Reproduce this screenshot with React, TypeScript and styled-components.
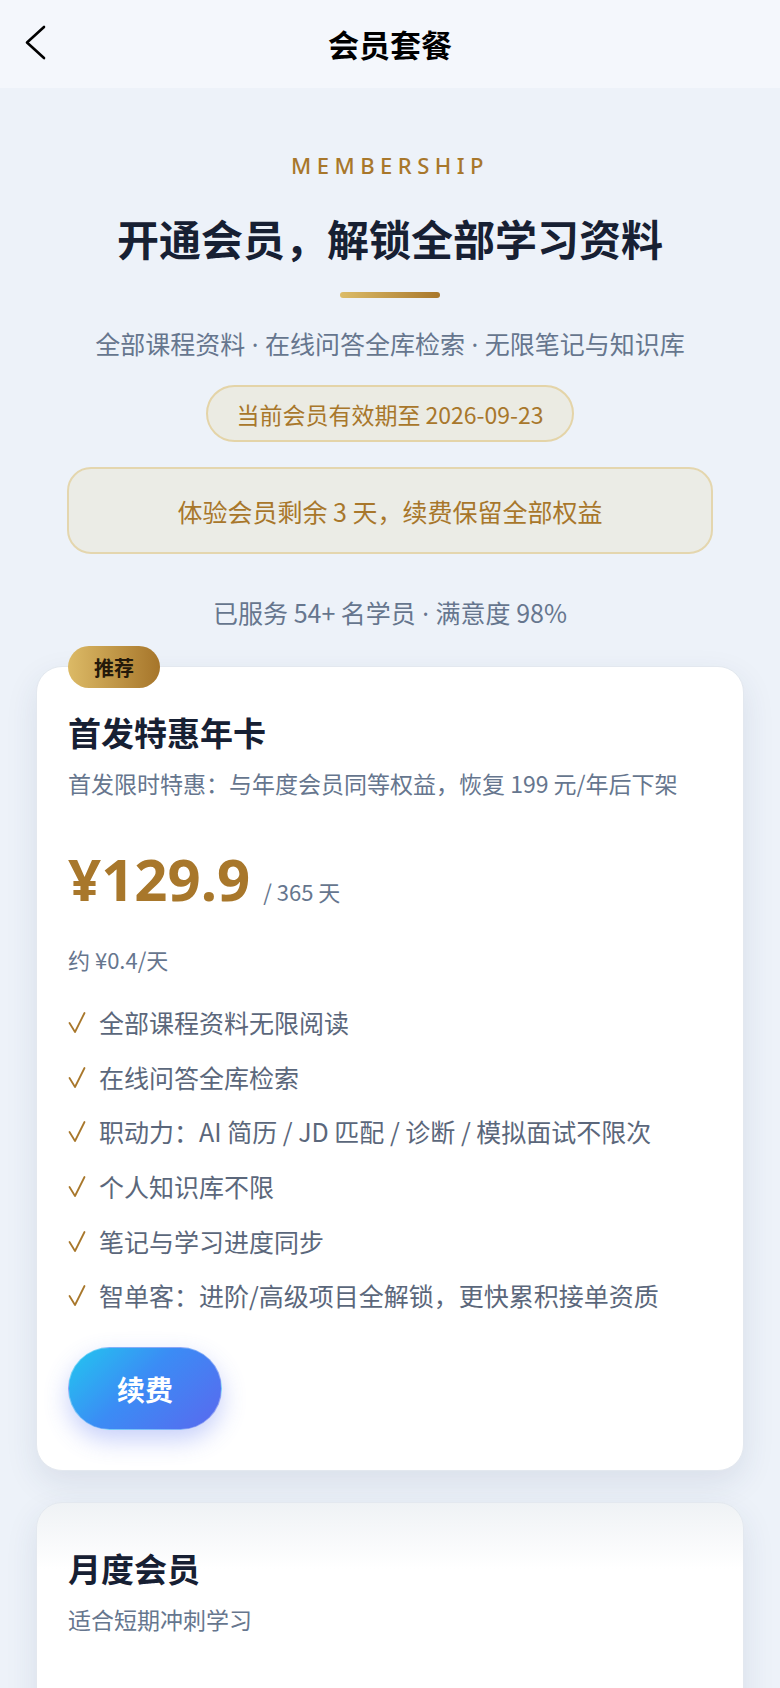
import styled, { createGlobalStyle } from 'styled-components';

const GlobalStyle = createGlobalStyle`
    * {
        box-sizing: border-box;
    }
    body {
        margin: 0;
        background: #edf2f9;
        font-family: 'Noto Sans CJK SC', 'Noto Sans', sans-serif;
        color: #172033;
    }
`;

const FEATURES = [
    '全部课程资料无限阅读',
    '在线问答全库检索',
    '职动力：AI 简历 / JD 匹配 / 诊断 / 模拟面试不限次',
    '个人知识库不限',
    '笔记与学习进度同步',
    '智单客：进阶/高级项目全解锁，更快累积接单资质',
];

const BackIcon = () => (
    <svg width="24" height="36" viewBox="0 0 24 36" fill="none">
        <polyline points="20,2 3,17.5 20,33" stroke="#000" strokeWidth="2.6" strokeLinecap="round" strokeLinejoin="round" />
    </svg>
);

const CheckIcon = () => (
    <svg width="18" height="24" viewBox="0 0 18 24" fill="none">
        <polyline points="1.5,13 7,22 16.5,3" stroke="#a8772b" strokeWidth="1.8" strokeLinecap="round" strokeLinejoin="round" />
    </svg>
);

// joins parts with a narrow latin middle dot
const Dotted = ({ parts }: { parts: string[] }) => (
    <>
        {parts.map((part, i) => (
            <span key={part}>
                {i > 0 && <Dot> · </Dot>}
                {part}
            </span>
        ))}
    </>
);

const App = () => {
    return (
        <>
            <GlobalStyle />
            <Page>
                <Header>
                    <BackButton>
                        <BackIcon />
                    </BackButton>
                    <HeaderTitle>会员套餐</HeaderTitle>
                    <span />
                </Header>

                <Hero>
                    <Eyebrow>MEMBERSHIP</Eyebrow>
                    <Heading>开通会员，解锁全部学习资料</Heading>
                    <GoldBar />
                    <Subtitle>
                        <Dotted parts={['全部课程资料', '在线问答全库检索', '无限笔记与知识库']} />
                    </Subtitle>
                    <ExpiryPill>当前会员有效期至 2026-09-23</ExpiryPill>
                    <TrialNotice>体验会员剩余 3 天，续费保留全部权益</TrialNotice>
                    <Stats>
                        <Dotted parts={['已服务 54+ 名学员', '满意度 98%']} />
                    </Stats>
                </Hero>

                <PlanList>
                    <PlanCard>
                        <Badge>推荐</Badge>
                        <PlanTitle>首发特惠年卡</PlanTitle>
                        <PlanDesc>首发限时特惠：与年度会员同等权益，恢复 199 元/年后下架</PlanDesc>
                        <PriceRow>
                            <Price>¥129.9</Price>
                            <Period>/ 365 天</Period>
                        </PriceRow>
                        <PerDay>约 ¥0.4/天</PerDay>
                        <FeatureList>
                            {FEATURES.map((text) => (
                                <Feature key={text}>
                                    <CheckIcon />
                                    <span>{text}</span>
                                </Feature>
                            ))}
                        </FeatureList>
                        <RenewButton>续费</RenewButton>
                    </PlanCard>

                    <PlanCard $faded>
                        <PlanTitle>月度会员</PlanTitle>
                        <PlanDesc>适合短期冲刺学习</PlanDesc>
                    </PlanCard>
                </PlanList>
            </Page>
        </>
    );
};

export default App;

const Page = styled.div`
    width: 780px;
    min-height: 1688px;
    overflow: hidden;
`;

const Header = styled.header`
    height: 88px;
    display: grid;
    grid-template-columns: 1fr auto 1fr;
    align-items: center;
    padding: 0 24px;
    background: #f4f7fc;
`;

const BackButton = styled.button`
    display: flex;
    align-items: center;
    width: 40px;
    height: 40px;
    padding: 0;
    margin-top: -2px;
    border: none;
    background: transparent;
`;

const HeaderTitle = styled.h1`
    margin: 0;
    font-size: 31px;
    line-height: 40px;
    font-weight: 700;
    color: #000;
`;

const Hero = styled.section`
    display: flex;
    flex-direction: column;
    align-items: center;
    padding-top: 62px;
    text-align: center;
`;

const Eyebrow = styled.div`
    font-family: 'Noto Sans', sans-serif;
    font-size: 22px;
    line-height: 30px;
    font-weight: 500;
    letter-spacing: 5.5px;
    color: #a8772b;
`;

const Heading = styled.h2`
    margin: 30px 0 0;
    font-size: 42px;
    line-height: 56px;
    font-weight: 700;
    color: #172033;
`;

const GoldBar = styled.div`
    width: 100px;
    height: 6px;
    margin-top: 26px;
    border-radius: 3px;
    background: linear-gradient(90deg, #dcbc68, #a8772b);
`;

const Subtitle = styled.p`
    margin: 28px 0 0;
    font-size: 25px;
    line-height: 34px;
    color: #66768e;
`;

const Dot = styled.span`
    font-family: 'Noto Sans', sans-serif;
`;

const ExpiryPill = styled.div`
    height: 57px;
    margin-top: 24px;
    padding: 0 28px;
    display: flex;
    align-items: center;
    border: 2px solid #e4d4a8;
    border-radius: 29px;
    background: #ebebe3;
    font-size: 23px;
    color: #a8772b;
`;

const TrialNotice = styled.div`
    width: 646px;
    height: 87px;
    margin-top: 25px;
    display: flex;
    align-items: center;
    justify-content: center;
    border: 2px solid #e4d6ae;
    border-radius: 24px;
    background: #ebece6;
    font-size: 25px;
    color: #a8772b;
`;

const Stats = styled.div`
    margin-top: 41px;
    font-size: 25px;
    line-height: 34px;
    color: #66768e;
`;

const PlanList = styled.div`
    display: flex;
    flex-direction: column;
    gap: 31px;
    padding: 36px 36px 0;
`;

const PlanCard = styled.div<{ $faded?: boolean }>`
    position: relative;
    display: flex;
    flex-direction: column;
    align-items: flex-start;
    padding: 43px 31px 40px;
    min-height: ${({ $faded }) => ($faded ? '360px' : 'auto')};
    border: 1px solid #e3e8ef;
    border-radius: 26px;
    background: ${({ $faded }) => ($faded ? 'linear-gradient(180deg, #eff2f5 0px, #ffffff 66px)' : '#ffffff')};
    box-shadow: 0 12px 32px rgba(40, 60, 100, 0.1);
`;

const Badge = styled.div`
    position: absolute;
    top: -21px;
    left: 31px;
    width: 92px;
    height: 42px;
    display: flex;
    align-items: center;
    justify-content: center;
    border-radius: 21px;
    background: linear-gradient(90deg, #dcba66, #a6752a);
    font-size: 20px;
    font-weight: 700;
    color: #24190a;
`;

const PlanTitle = styled.h3`
    margin: 0;
    font-size: 33px;
    line-height: 44px;
    font-weight: 700;
    color: #172033;
`;

const PlanDesc = styled.p`
    margin: 13px 0 0;
    font-size: 23px;
    line-height: 32px;
    color: #66768e;
`;

const PriceRow = styled.div`
    display: flex;
    align-items: baseline;
    gap: 13px;
    margin-top: 50px;
`;

const Price = styled.span`
    font-family: 'Noto Sans', sans-serif;
    font-size: 58px;
    line-height: 60px;
    font-weight: 700;
    color: #a8772b;
`;

const Period = styled.span`
    font-size: 22px;
    color: #66768e;
`;

const PerDay = styled.div`
    margin-top: 35px;
    font-size: 22px;
    line-height: 30px;
    color: #66768e;
`;

const FeatureList = styled.ul`
    display: flex;
    flex-direction: column;
    gap: 20.7px;
    margin: 31px 0 0;
    padding: 0;
    list-style: none;
`;

const Feature = styled.li`
    display: flex;
    align-items: center;
    gap: 13px;
    font-size: 25px;
    line-height: 34px;
    color: #5b677b;

    svg {
        flex-shrink: 0;
    }
`;

const RenewButton = styled.button`
    width: 154px;
    height: 83px;
    margin-top: 35px;
    border: 1px solid rgba(255, 255, 255, 0.35);
    border-radius: 42px;
    background: linear-gradient(135deg, #22c7ef 0%, #3b8cf5 45%, #5a68ee 100%);
    box-shadow: 0 10px 24px rgba(70, 100, 240, 0.3);
    font-family: 'Noto Sans CJK SC', sans-serif;
    font-size: 28px;
    font-weight: 700;
    color: #ffffff;
`;
